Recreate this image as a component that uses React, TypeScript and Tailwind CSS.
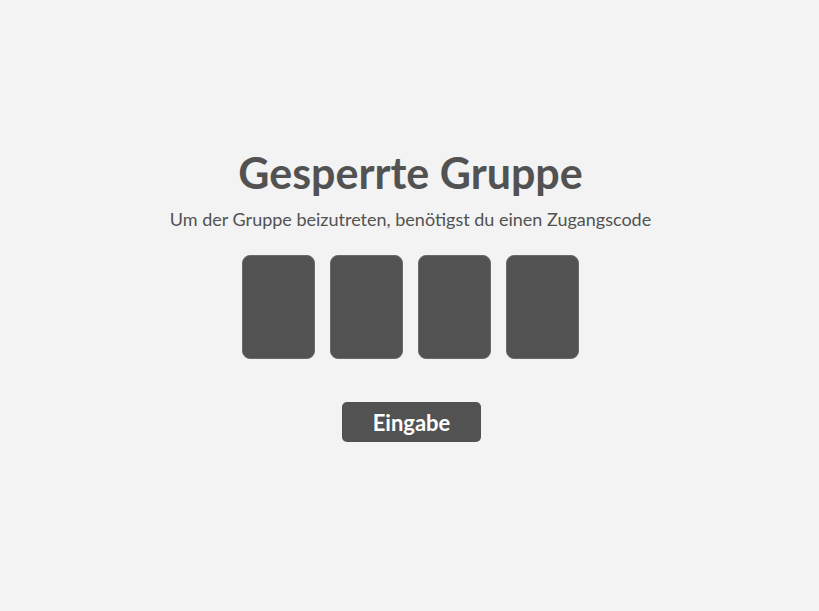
export default function App() {
  return (
    <div
      className="flex min-h-screen w-full flex-col items-center bg-[#f3f3f3] pl-[2px] pt-[147px] text-[#525252]"
      style={{ fontFamily: "Lato, 'Noto Sans', sans-serif" }}
    >
      <h1 className="text-[43px] font-bold leading-[52px]">Gesperrte Gruppe</h1>
      <p className="mt-[8px] text-[18px] leading-[24px]">
        Um der Gruppe beizutreten, benötigst du einen Zugangscode
      </p>
      <div className="mt-[24px] flex gap-[15px]">
        {[0, 1, 2, 3].map((i) => (
          <input
            key={i}
            maxLength={1}
            className="h-[104px] w-[73px] rounded-[8px] border border-[#6a6a6a] bg-[#525252] text-center text-4xl text-white outline-none"
          />
        ))}
      </div>
      <button className="ml-[2px] mt-[43px] h-[40px] w-[139px] rounded-[5px] bg-[#525252] text-[22px] font-bold text-white">
        Eingabe
      </button>
    </div>
  );
}
